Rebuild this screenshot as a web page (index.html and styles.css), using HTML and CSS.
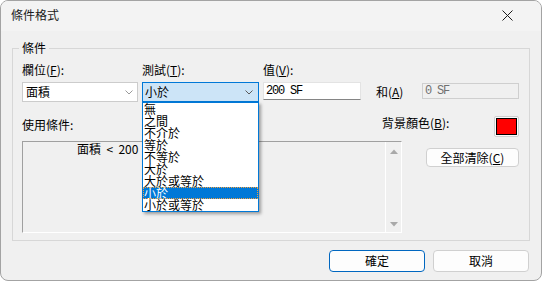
FILE: index.html
```html
<!DOCTYPE html>
<html lang="zh-Hant">
<head>
<meta charset="utf-8">
<title>條件格式</title>
<link rel="stylesheet" href="styles.css">
</head>
<body>
<div class="window">
  <div class="titlebar">
    <span class="title">條件格式</span>
    <svg class="close" width="11" height="11" viewBox="0 0 11 11"><path d="M0.5 0.5 L10.5 10.5 M10.5 0.5 L0.5 10.5" stroke="#1b1b1b" stroke-width="1" fill="none"/></svg>
  </div>
  <div class="content">
    <fieldset class="group">
      <legend class="legend">條件</legend>
      <div class="row labels">
        <span class="lbl c1">欄位(<u>F</u>):</span>
        <span class="lbl c2">測試(<u>T</u>):</span>
        <span class="lbl c3">值(<u>V</u>):</span>
      </div>
      <div class="row fields">
        <div class="combo c1">
          <span class="combo-text">面積</span>
          <svg class="chev" width="8" height="5" viewBox="0 0 8 5"><path d="M0.5 0.5 L4 4 L7.5 0.5" stroke="#9a9a9a" fill="none"/></svg>
        </div>
        <div class="combo c2 active">
          <span class="combo-text">小於</span>
          <svg class="chev" width="8" height="5" viewBox="0 0 8 5"><path d="M0.5 0.5 L4 4 L7.5 0.5" stroke="#5a5a5a" fill="none"/></svg>
          <ul class="dropdown">
            <li>無</li>
            <li>之間</li>
            <li>不介於</li>
            <li>等於</li>
            <li>不等於</li>
            <li>大於</li>
            <li>大於或等於</li>
            <li class="selected">小於</li>
            <li>小於或等於</li>
          </ul>
        </div>
        <div class="input c3">200 SF</div>
        <span class="and">和(<u>A</u>)</span>
        <div class="input disabled">0 SF</div>
      </div>
      <div class="row row3">
        <span class="lbl use">使用條件:</span>
        <span class="lbl bg">背景顏色(<u>B</u>):</span>
        <div class="swatch"><div class="swatch-fill"></div></div>
      </div>
      <div class="row row4">
        <div class="rules">
          <div class="rules-list">
            <div class="rule">面積 &nbsp;&lt;&nbsp; 200</div>
          </div>
          <div class="scrollbar">
            <svg width="8" height="5" viewBox="0 0 8 5"><path d="M0 5 L4 0.5 L8 5 Z" fill="#a9a9a9"/></svg>
            <svg width="8" height="5" viewBox="0 0 8 5"><path d="M0 0 L4 4.5 L8 0 Z" fill="#a9a9a9"/></svg>
          </div>
        </div>
        <div class="side">
          <button class="btn clear">全部清除(<u>C</u>)</button>
        </div>
      </div>
    </fieldset>
    <div class="actions">
      <button class="btn action primary">確定</button>
      <button class="btn action">取消</button>
    </div>
  </div>
</div>
</body>
</html>
```
FILE: styles.css
```css
* { box-sizing: border-box; }
html, body {
  margin: 0;
  padding: 0;
  background: #ffffff;
}
body {
  font-family: "Noto Sans CJK TC", "Noto Sans", sans-serif;
  font-size: 12px;
  color: #000;
}
.window {
  width: 542px;
  height: 281px;
  border: 1px solid #a3a3a3;
  border-radius: 8px;
  background: #f0f0f0;
  overflow: hidden;
  display: flex;
  flex-direction: column;
}
.titlebar {
  height: 30px;
  background: #f3f3f3;
  display: flex;
  align-items: center;
  padding: 0 0 2px 10px;
  flex: none;
}
.title {
  font-size: 12px;
  line-height: 14px;
  flex: 1;
  color: #1a1a1a;
}
.close {
  margin-right: 28px;
  margin-top: 1px;
}
.content {
  flex: 1;
  display: flex;
  flex-direction: column;
  padding: 0 11px;
}
.group {
  margin: 9px 0 0 0;
  padding: 7px 10px 7px 9px;
  border: 1px solid #d7d7d7;
  min-width: 0;
  width: 518px;
}
.legend {
  padding: 0 3px;
  margin-left: -3px;
  line-height: 16px;
  font-size: 12px;
}
.row {
  display: flex;
}
.lbl {
  line-height: 14px;
  white-space: nowrap;
}
u { text-decoration-thickness: 1px; text-underline-offset: 1px; }
.c1 { width: 116px; flex: none; }
.c2 { width: 117px; flex: none; margin-left: 4px; }
.c3 { width: 98px; flex: none; margin-left: 4px; }
.fields {
  margin-top: 5px;
  align-items: flex-start;
}
.combo {
  position: relative;
  height: 20px;
  border: 1px solid #cccccc;
  background: #ffffff;
  display: flex;
  align-items: center;
  padding-left: 3px;
  padding-right: 4px;
}
.combo-text {
  flex: 1;
  line-height: 18px;
  font-size: 12px;
}
.chev { flex: none; margin-top: 1px; }
.combo.active {
  background: #cce4f7;
  border-color: #0078d7;
  padding-left: 2px;
  padding-right: 5px;
}
.dropdown {
  position: absolute;
  left: -1px;
  top: 19px;
  width: 117px;
  margin: 0;
  padding: 0;
  list-style: none;
  background: #ffffff;
  border: 1px solid #0078d7;
  box-shadow: 2px 2px 3px rgba(0, 0, 0, 0.35);
  z-index: 5;
}
.dropdown li {
  height: 12px;
  line-height: 12px;
  font-size: 12px;
  padding-left: 1px;
  white-space: nowrap;
}
.dropdown li.selected {
  background: #0078d7;
  color: #ffffff;
  outline: 1px dotted #f0a040;
  outline-offset: -1px;
}
.input {
  height: 18px;
  background: #ffffff;
  border: 1px solid #e3e3e3;
  border-bottom-color: #858585;
  font-family: "Liberation Mono", "DejaVu Sans Mono", monospace;
  font-size: 12px;
  letter-spacing: -1.2px;
  line-height: 16px;
  padding-left: 2px;
}
.and {
  margin-left: 15px;
  line-height: 20px;
}
.input.disabled {
  margin-left: auto;
  margin-top: 1px;
  width: 97px;
  height: 16px;
  line-height: 14px;
  background: #f0f0f0;
  border: 1px solid #cfcfcf;
  color: #707070;
}
.row3 {
  margin-top: 14px;
  align-items: flex-start;
  height: 21px;
}
.use {
  width: 360px;
  margin-top: 2px;
}
.bg {
  margin-top: 0;
}
.swatch {
  margin-left: auto;
  width: 25px;
  height: 21px;
  border: 1px solid #cfcfcf;
  border-radius: 2px;
  background: #fbfbfb;
  padding: 1px;
}
.swatch-fill {
  width: 100%;
  height: 100%;
  background: #ff0000;
  border: 1px solid #000;
}
.row4 {
  margin-top: 4px;
}
.rules {
  width: 380px;
  height: 92px;
  border: 1px solid #a0a0a0;
  border-right-color: #ffffff;
  border-bottom-color: #ffffff;
  display: flex;
}
.rules-list {
  flex: 1;
  padding-left: 54px;
}
.rule {
  line-height: 13px;
  font-size: 12px;
  white-space: pre;
}
.scrollbar {
  width: 16px;
  border-left: 1px solid #ffffff;
  display: flex;
  flex-direction: column;
  justify-content: space-between;
  align-items: center;
  padding: 7px 0 5px 0;
}
.side {
  flex: 1;
  display: flex;
  justify-content: flex-end;
  align-items: flex-start;
}
.btn {
  font-family: "Noto Sans CJK TC", "Noto Sans", sans-serif;
  font-size: 12px;
  color: #000;
  background: #fdfdfd;
  border: 1px solid #d0d0d0;
  border-radius: 4px;
  padding: 0;
  line-height: 14px;
}
.clear {
  margin-top: 7px;
  width: 93px;
  height: 19px;
}
.actions {
  display: flex;
  justify-content: flex-end;
  gap: 8px;
  margin-top: 9px;
  padding-right: 1px;
}
.action {
  width: 96px;
  height: 22px;
}
.primary {
  border-color: #0067c0;
}
```
